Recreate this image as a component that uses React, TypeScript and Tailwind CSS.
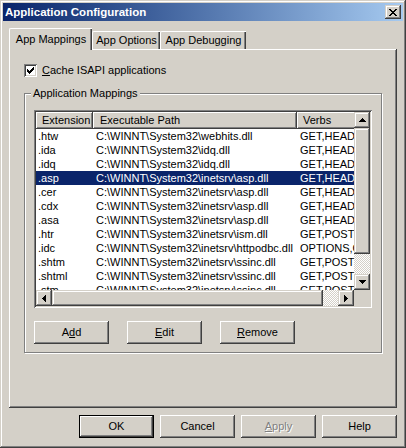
import React from 'react';

// win2000 edge styles
const raised = 'shadow-[inset_-1px_-1px_#404040,inset_1px_1px_#fff,inset_-2px_-2px_#808080,inset_2px_2px_#d4d0c8]';
const scrollBtn = 'shadow-[inset_-1px_-1px_#404040,inset_1px_1px_#d4d0c8,inset_-2px_-2px_#808080,inset_2px_2px_#fff]';
const sunken = 'shadow-[inset_1px_1px_#808080,inset_-1px_-1px_#fff,inset_2px_2px_#404040,inset_-2px_-2px_#d4d0c8]';
const checker = 'bg-[image:repeating-conic-gradient(#fff_0_25%,#d4d0c8_0_50%)] bg-[length:2px_2px]';

const UP = ['...X...', '..XXX..', '.XXXXX.', 'XXXXXXX'];
const DOWN = ['XXXXXXX', '.XXXXX.', '..XXX..', '...X...'];
const LEFT = ['...X', '..XX', '.XXX', 'XXXX', '.XXX', '..XX', '...X'];
const RIGHT = ['X...', 'XX..', 'XXX.', 'XXXX', 'XXX.', 'XX..', 'X...'];
const CHECK = ['......X', '.....XX', 'X...XXX', 'XX.XXX.', 'XXXXX..', '.XXX...', '..X....'];
const CLOSE = ['XX....XX', '.XX..XX.', '..XXXX..', '...XX...', '..XXXX..', '.XX..XX.', 'XX....XX'];

function Pix({ rows }: { rows: string[] }) {
  const w = rows[0].length;
  const h = rows.length;
  return (
    <svg width={w} height={h} viewBox={`0 0 ${w} ${h}`} shapeRendering="crispEdges">
      {rows.flatMap((r, y) =>
        r.split('').map((c, x) => (c === 'X' ? <rect key={`${x}-${y}`} x={x} y={y} width={1} height={1} fill="#000" /> : null))
      )}
    </svg>
  );
}

const mappings = [
  ['.htw', 'C:\\WINNT\\System32\\webhits.dll', 'GET,HEAD,POST'],
  ['.ida', 'C:\\WINNT\\System32\\idq.dll', 'GET,HEAD,POST'],
  ['.idq', 'C:\\WINNT\\System32\\idq.dll', 'GET,HEAD,POST'],
  ['.asp', 'C:\\WINNT\\System32\\inetsrv\\asp.dll', 'GET,HEAD,POST,TRACE'],
  ['.cer', 'C:\\WINNT\\System32\\inetsrv\\asp.dll', 'GET,HEAD,POST,TRACE'],
  ['.cdx', 'C:\\WINNT\\System32\\inetsrv\\asp.dll', 'GET,HEAD,POST,TRACE'],
  ['.asa', 'C:\\WINNT\\System32\\inetsrv\\asp.dll', 'GET,HEAD,POST,TRACE'],
  ['.htr', 'C:\\WINNT\\System32\\inetsrv\\ism.dll', 'GET,POST'],
  ['.idc', 'C:\\WINNT\\System32\\inetsrv\\httpodbc.dll', 'OPTIONS,GET,HEAD,POST,PUT,DELETE,TRACE'],
  ['.shtm', 'C:\\WINNT\\System32\\inetsrv\\ssinc.dll', 'GET,POST'],
  ['.shtml', 'C:\\WINNT\\System32\\inetsrv\\ssinc.dll', 'GET,POST'],
  ['.stm', 'C:\\WINNT\\System32\\inetsrv\\ssinc.dll', 'GET,POST'],
];

function Button({ children, isDefault = false, disabled = false }: { children: React.ReactNode; isDefault?: boolean; disabled?: boolean }) {
  return (
    <div
      className={
        'w-[75px] h-[23px] flex items-center justify-center ' +
        (isDefault
          ? 'border border-black shadow-[inset_-1px_-1px_#404040,inset_1px_1px_#fff,inset_-2px_-2px_#808080]'
          : raised) +
        (disabled ? ' text-[#808080] [text-shadow:1px_1px_0_#fff]' : '')
      }
    >
      {children}
    </div>
  );
}

function App() {
  return (
    <div className="w-[406px] h-[448px] overflow-hidden bg-[#d4d0c8] p-[3px] flex flex-col font-['Liberation_Sans',Arial,sans-serif] text-[11px] leading-[13px] text-black shadow-[inset_-1px_-1px_#404040,inset_1px_1px_#d4d0c8,inset_-2px_-2px_#808080,inset_2px_2px_#fff]">
      {/* Title bar */}
      <div className="h-[18px] flex items-center justify-between pl-[2px] pr-[2px] bg-linear-to-r from-[#0a246a] to-[#a6caf0]">
        <span className="font-bold text-white text-[11.5px]">Application Configuration</span>
        <div className={`w-[16px] h-[14px] flex items-center justify-center bg-[#d4d0c8] ${scrollBtn}`}>
          <Pix rows={CLOSE} />
        </div>
      </div>

      <div className="flex-1 flex flex-col pt-[7px] px-[6px]">
        {/* Tabs */}
        <div className="flex items-end h-[21px]">
          <div className="relative z-10 w-[83px] h-[22px] -mb-[1px] bg-[#d4d0c8] border-l border-t border-white rounded-tl-[2px] shadow-[inset_-1px_0_#404040,inset_-2px_0_#808080] flex items-center justify-center pb-[1px]">
            App Mappings
          </div>
          <div className="w-[68px] h-[18px] border-l border-t border-white rounded-tl-[2px] shadow-[inset_-1px_0_#404040,inset_-2px_0_#808080] flex items-center justify-center">
            App Options
          </div>
          <div className="w-[86px] h-[18px] border-l border-t border-white rounded-tl-[2px] shadow-[inset_-1px_0_#404040,inset_-2px_0_#808080] flex items-center justify-center">
            App Debugging
          </div>
        </div>

        {/* Tab panel */}
        <div className="h-[359px] pt-[15px] pl-[15px] shadow-[inset_-1px_-1px_#404040,inset_1px_1px_#fff,inset_-2px_-2px_#808080]">
          <div className="flex items-center h-[13px] gap-[5px]">
            <div className={`w-[13px] h-[13px] bg-white flex items-center justify-center ${sunken}`}>
              <Pix rows={CHECK} />
            </div>
            <span>
              <u>C</u>ache ISAPI applications
            </span>
          </div>

          {/* Group box */}
          <div className="relative mt-[16px] w-[358px] h-[260px] border border-[#808080] shadow-[inset_1px_1px_#fff,1px_1px_#fff] pt-[16px] pl-[9px]">
            <span className="absolute left-[6px] -top-[7px] px-[2px] bg-[#d4d0c8]">Application Mappings</span>

            {/* List view */}
            <div className={`w-[338px] h-[198px] p-[2px] bg-white flex flex-col ${sunken}`}>
              <div className="flex h-[178px]">
                <div className="flex-1 overflow-hidden">
                  <div className="flex h-[17px] whitespace-nowrap">
                    <div className={`w-[57px] shrink-0 bg-[#d4d0c8] pl-[6px] flex items-center ${raised}`}>Extension</div>
                    <div className={`w-[204px] shrink-0 bg-[#d4d0c8] pl-[7px] flex items-center ${raised}`}>Executable Path</div>
                    <div className={`w-[120px] shrink-0 bg-[#d4d0c8] pl-[6px] flex items-center ${raised}`}>Verbs</div>
                  </div>
                  {mappings.map(([ext, path, verbs]) => (
                    <div
                      key={ext}
                      className={'flex h-[14px] items-center whitespace-nowrap ' + (ext === '.asp' ? 'bg-[#0a246a] text-white' : '')}
                    >
                      <div className="w-[57px] shrink-0 pl-[2px]">{ext}</div>
                      <div className="w-[204px] shrink-0 pl-[3px]">{path}</div>
                      <div className="shrink-0 pl-[3px]">{verbs}</div>
                    </div>
                  ))}
                </div>
                <div className="w-[16px] flex flex-col bg-[#d4d0c8]">
                  <div className={`h-[16px] flex items-center justify-center ${scrollBtn}`}>
                    <Pix rows={UP} />
                  </div>
                  <div className={`h-[126px] ${scrollBtn}`} />
                  <div className={`flex-1 ${checker}`} />
                  <div className={`h-[16px] flex items-center justify-center ${scrollBtn}`}>
                    <Pix rows={DOWN} />
                  </div>
                </div>
              </div>
              <div className="flex h-[16px] bg-[#d4d0c8]">
                <div className={`w-[16px] flex items-center justify-center ${scrollBtn}`}>
                  <Pix rows={LEFT} />
                </div>
                <div className={`w-[271px] ${scrollBtn}`} />
                <div className={`flex-1 ${checker}`} />
                <div className={`w-[16px] flex items-center justify-center ${scrollBtn}`}>
                  <Pix rows={RIGHT} />
                </div>
                <div className="w-[16px]" />
              </div>
            </div>

            <div className="flex gap-[18px] mt-[13px]">
              <Button>
                A<u>d</u>d
              </Button>
              <Button>
                <u>E</u>dit
              </Button>
              <Button>
                <u>R</u>emove
              </Button>
            </div>
          </div>
        </div>

        {/* Dialog buttons */}
        <div className="flex justify-end gap-[6px] mt-[7px]">
          <Button isDefault>OK</Button>
          <Button>Cancel</Button>
          <Button disabled>
            <u>A</u>pply
          </Button>
          <Button>Help</Button>
        </div>
      </div>
    </div>
  );
}

export default App;
